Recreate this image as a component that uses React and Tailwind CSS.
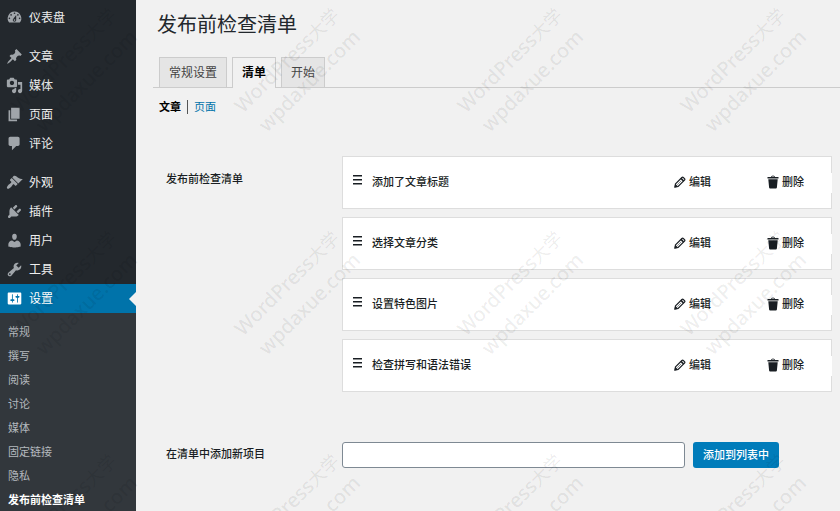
const primaryMenu = [
  {
    label: '仪表盘',
    path: 'M3.76 16h12.48A7.998 7.998 0 0 0 10 3a7.998 7.998 0 0 0-6.24 13zM10 4c.55 0 1 .45 1 1s-.45 1-1 1-1-.45-1-1 .45-1 1-1zM6 6c.55 0 1 .45 1 1s-.45 1-1 1-1-.45-1-1 .45-1 1-1zm8 0c.55 0 1 .45 1 1s-.45 1-1 1-1-.45-1-1 .45-1 1-1zm-5.37 5.55L12 7v6c0 1.1-.9 2-2 2s-2-.9-2-2c0-.57.24-1.08.63-1.45zM4 10c.55 0 1 .45 1 1s-.45 1-1 1-1-.45-1-1 .45-1 1-1zm12 0c.55 0 1 .45 1 1s-.45 1-1 1-1-.45-1-1 .45-1 1-1zm-5 3c0-.55-.45-1-1-1s-1 .45-1 1 .45 1 1 1 1-.45 1-1z',
  },
]

const contentMenu = [
  {
    label: '文章',
    path: 'M10.44 3.02l1.82-1.82 6.36 6.35-1.83 1.82c-1.05-.68-2.48-.57-3.41.36l-.75.75c-.92.93-1.04 2.35-.35 3.41l-1.83 1.82-2.41-2.41-2.8 2.79c-.42.42-3.38 2.71-3.8 2.29s1.86-3.39 2.28-3.81l2.79-2.79L4.1 9.36l1.83-1.82c1.05.69 2.48.57 3.4-.36l.75-.75c.93-.92 1.05-2.35.36-3.41z',
  },
  {
    label: '媒体',
    path: 'M13 11V4c0-.55-.45-1-1-1h-1.67L9 1H5L3.67 3H2c-.55 0-1 .45-1 1v7c0 .55.45 1 1 1h10c.55 0 1-.45 1-1zM7 4.5c1.38 0 2.5 1.12 2.5 2.5S8.38 9.5 7 9.5 4.5 8.38 4.5 7 5.62 4.5 7 4.5zM14 6h5v10.5c0 1.38-1.12 2.5-2.5 2.5S14 17.88 14 16.5s1.12-2.5 2.5-2.5c.17 0 .34.02.5.05V9h-3V6zm-4 8.05V13h2v3.5c0 1.38-1.12 2.5-2.5 2.5S7 17.88 7 16.5 8.12 14 9.5 14c.17 0 .34.02.5.05z',
  },
  { label: '页面', path: 'M6 15V2h10v13H6zm-1 1h8v2H3V5h2v11z' },
  {
    label: '评论',
    path: 'M5 2h9c1.1 0 2 .9 2 2v7c0 1.1-.9 2-2 2h-2l-5 5v-5H5c-1.1 0-2-.9-2-2V4c0-1.1.9-2 2-2z',
  },
]

const adminMenu = [
  {
    label: '外观',
    path: 'M14.48 11.06L7.41 3.99l1.5-1.5c.5-.56 2.3-.47 3.51.32 1.21.8 1.43 1.28 2.91 2.1 1.18.64 2.45 1.26 4.45.85zm-.71.71L6.7 4.7 4.93 6.47c-.39.39-.39 1.02 0 1.41l1.06 1.06c.39.39.39 1.03 0 1.42-.6.6-1.43 1.11-2.21 1.69-.35.26-.7.53-1.01.84C1.43 14.23.4 16.08 1.4 17.07c.99 1 2.84-.03 4.18-1.36.31-.31.58-.66.85-1.02.57-.78 1.08-1.61 1.69-2.21.39-.39 1.02-.39 1.41 0l1.06 1.06c.39.39 1.02.39 1.41 0z',
  },
  {
    label: '插件',
    path: 'M13.11 4.36L9.87 7.6 8 5.73l3.24-3.24c.35-.34 1.05-.2 1.56.32.52.51.66 1.21.31 1.55zm-8 1.77l.91-1.12 9.01 9.01-1.19.84c-.71.71-2.63 1.16-3.82 1.16H6.14L4.9 17.26c-.59.59-1.54.59-2.12 0-.59-.58-.59-1.53 0-2.12l1.24-1.24v-3.88c0-1.13.4-3.19 1.09-3.89zm7.26 3.97l3.24-3.24c.34-.35 1.04-.21 1.55.31.52.51.66 1.21.31 1.55l-3.24 3.25z',
  },
  {
    label: '用户',
    path: 'M10 9.25c-2.27 0-2.73-3.44-2.73-3.44C7 4.02 7.82 2 9.97 2c2.16 0 2.98 2.02 2.71 3.81 0 0-.41 3.44-2.68 3.44zm0 2.57L12.72 10c2.39 0 4.52 2.33 4.52 4.53v2.49s-3.65 1.13-7.24 1.13c-3.65 0-7.24-1.13-7.24-1.13v-2.49c0-2.25 1.94-4.48 4.47-4.48z',
  },
  {
    label: '工具',
    path: 'M16.68 9.77c-1.34 1.34-3.3 1.67-4.95.99l-5.41 6.52c-.99.99-2.59.99-3.58 0s-.99-2.59 0-3.57l6.52-5.42c-.68-1.65-.35-3.61.99-4.95 1.28-1.28 3.12-1.62 4.72-1.06l-2.89 2.89 2.82 2.82 2.86-2.87c.53 1.58.18 3.39-1.08 4.65zM3.81 16.21c.4.39 1.04.39 1.43 0 .4-.4.4-1.04 0-1.43-.39-.4-1.03-.4-1.43 0-.39.39-.39 1.03 0 1.43z',
  },
  {
    label: '设置',
    active: true,
    path: 'M18 16V4c0-.55-.45-1-1-1H3c-.55 0-1 .45-1 1v12c0 .55.45 1 1 1h14c.55 0 1-.45 1-1zM8 11h1c.55 0 1 .45 1 1s-.45 1-1 1H8v1.5c0 .28-.22.5-.5.5s-.5-.22-.5-.5V13H6c-.55 0-1-.45-1-1s.45-1 1-1h1V5.5c0-.28.22-.5.5-.5s.5.22.5.5V11zm5-2h-1c-.55 0-1-.45-1-1s.45-1 1-1h1V5.5c0-.28.22-.5.5-.5s.5.22.5.5V7h1c.55 0 1 .45 1 1s-.45 1-1 1h-1v5.5c0 .28-.22.5-.5.5s-.5-.22-.5-.5V9z',
  },
]

const settingsMenu = ['常规', '撰写', '阅读', '讨论', '媒体', '固定链接', '隐私', '发布前检查清单']

const tabs = ['常规设置', '清单', '开始']

const checklist = ['添加了文章标题', '选择文章分类', '设置特色图片', '检查拼写和语法错误']

// repeating watermark, one tile every 223 x 223 px
const tileColumns = [-223, 0, 223, 446]
const tileRows = [0, 223, 446]

function MenuGroup({ items }) {
  return (
    <ul>
      {items.map((item) => (
        <li key={item.label}>
          <a
            href="#"
            className={
              item.active
                ? 'relative flex h-[29px] items-center gap-1.5 bg-[#0073aa] pl-[6px] text-xs text-white'
                : 'flex h-[29px] items-center gap-1.5 pl-[6px] text-xs text-[#eeeeee]'
            }
          >
            <svg
              viewBox="0 0 20 20"
              className={item.active ? 'h-[17px] w-[17px] fill-white' : 'h-[17px] w-[17px] fill-[#a0a5aa]'}
              aria-hidden="true"
            >
              <path d={item.path} />
            </svg>
            {item.label}
            {item.active && (
              <span className="absolute top-1/2 right-0 -translate-y-1/2 border-y-[7px] border-r-[7px] border-y-transparent border-r-[#f1f1f1]" />
            )}
          </a>
        </li>
      ))}
    </ul>
  )
}

function Sidebar() {
  return (
    <nav className="flex w-[136px] shrink-0 flex-col bg-[#32373c]">
      <div className="flex flex-col gap-2.5 bg-[#23282d] pt-[3px]">
        <MenuGroup items={primaryMenu} />
        <MenuGroup items={contentMenu} />
        <MenuGroup items={adminMenu} />
      </div>
      <ul className="pt-[7px]">
        {settingsMenu.map((label, i) => (
          <li key={label}>
            <a
              href="#"
              className={
                i === settingsMenu.length - 1
                  ? 'flex h-6 items-center pl-2 text-[11px] font-bold text-white'
                  : 'flex h-6 items-center pl-2 text-[11px] text-[#b4b9be]'
              }
            >
              {label}
            </a>
          </li>
        ))}
      </ul>
    </nav>
  )
}

function HandleIcon() {
  return (
    <svg viewBox="0 0 10 10" className="h-2.5 w-2.5 fill-[#191e23]" aria-hidden="true">
      <path d="M0 0h9v1.6H0zM0 4h9v1.6H0zM0 8h9v1.6H0z" />
    </svg>
  )
}

function PencilIcon() {
  return (
    <svg viewBox="0 0 12 12" className="mb-0.5 h-3 w-3" fill="none" stroke="#191e23" aria-hidden="true">
      <path d="M1.5 7.9 7.9 1.5q.7-.7 1.4 0l1.2 1.2q.7.7 0 1.4L4.1 10.5 1 11z" strokeWidth="1.2" />
      <path d="M7 2.4 9.6 5" strokeWidth="1.6" />
      <path d="M3.2 8.8l4-4" strokeWidth=".5" />
      <path d="M.4 11.6 1.2 7.7l3.1 3.1z" fill="#191e23" stroke="none" />
    </svg>
  )
}

function TrashIcon() {
  return (
    <svg viewBox="0 0 12 14" className="mb-0.5 h-3.5 w-3" fill="#191e23" aria-hidden="true">
      <path d="M.5 2H4q.2-1.5 2-1.5T8 2h3.5v1.5H.5zM5 2h2q-.2-.7-1-.7T5 2zM1.3 4.3h9.4L9.9 12.5q-.1 1-1 1H3.100q-.9 0-1-1z" />
    </svg>
  )
}

function ChecklistItem({ title }) {
  return (
    <li className="flex h-[53px] items-center border border-[#dddddd] bg-white pl-2.5">
      <span className="w-[19px] pb-1.5">
        <HandleIcon />
      </span>
      <span className="flex-1 font-medium">{title}</span>
      <button type="button" className="flex w-[93px] items-center gap-[3px] font-medium">
        <PencilIcon />
        编辑
      </button>
      <button type="button" className="-mr-px flex h-5 w-[65px] items-center gap-[3px] bg-white font-medium">
        <TrashIcon />
        删除
      </button>
    </li>
  )
}

function Watermark() {
  return (
    <svg
      className="pointer-events-none absolute inset-0 h-full w-full fill-black/8 font-['Noto_Sans','Noto_Sans_CJK_SC',sans-serif] text-xl font-medium"
      aria-hidden="true"
    >
      {tileRows.map((y) =>
        tileColumns.map((x) => (
          <g key={`${x}-${y}`} transform={`translate(${x} ${y})`}>
            <text transform="translate(243 114) rotate(-45)">
              WordPress<tspan className="text-lg font-normal">大学</tspan>
            </text>
            <text transform="translate(267 133) rotate(-45)">wpdaxue.com</text>
          </g>
        )),
      )}
    </svg>
  )
}

export default function App() {
  return (
    <div className="relative flex min-h-screen overflow-hidden bg-[#f1f1f1] font-['Open_Sans','Noto_Sans_CJK_SC',sans-serif] text-[11px] text-[#191e23]">
      <Sidebar />

      <main className="min-w-0 flex-1 pl-[17px]">
        <h1 className="pt-2.5 pl-1 text-xl leading-[30px] text-[#23282d]">发布前检查清单</h1>

        {/* Tabs */}
        <div className="mt-[17px] flex gap-[5px] border-b border-[#cccccc] pl-1.5 text-xs">
          {tabs.map((tab) => (
            <a
              key={tab}
              href="#"
              className={
                tab === '清单'
                  ? '-mb-px flex h-[31px] items-center border border-b-0 border-[#cccccc] bg-[#f1f1f1] px-[9px] font-bold text-black'
                  : 'flex h-[30px] items-center border border-b-0 border-[#cccccc] bg-[#e5e5e5] px-[9px] text-[#444444]'
              }
            >
              {tab}
            </a>
          ))}
        </div>

        <div className="mt-3 flex h-[14px] items-center pl-1.5">
          <a href="#" className="border-r border-[#555555] pr-1.5 leading-[14px] font-bold text-black">
            文章
          </a>
          <a href="#" className="pl-1.5 leading-[14px] text-[#0073aa]">
            页面
          </a>
        </div>

        {/* Checklist */}
        <section className="mt-[42px] flex pr-2 pl-[13px]">
          <h2 className="w-[176px] shrink-0 pt-[15px] leading-4 font-medium">发布前检查清单</h2>
          <ul className="flex flex-1 flex-col gap-2">
            {checklist.map((title) => (
              <ChecklistItem key={title} title={title} />
            ))}
          </ul>
        </section>

        <form className="mt-[50px] flex items-center pr-2 pl-[13px]">
          <label htmlFor="new-item" className="w-[176px] shrink-0 pb-0.5 font-medium">
            在清单中添加新项目
          </label>
          <div className="flex flex-1 gap-2">
            <input
              id="new-item"
              type="text"
              className="h-[26px] w-[70%] rounded-[3px] border border-[#7e8993] bg-white px-2"
            />
            <button type="button" className="h-[26px] rounded-[3px] bg-[#007cba] px-2.5 font-medium text-white">
              添加到列表中
            </button>
          </div>
        </form>
      </main>

      <Watermark />
    </div>
  )
}
